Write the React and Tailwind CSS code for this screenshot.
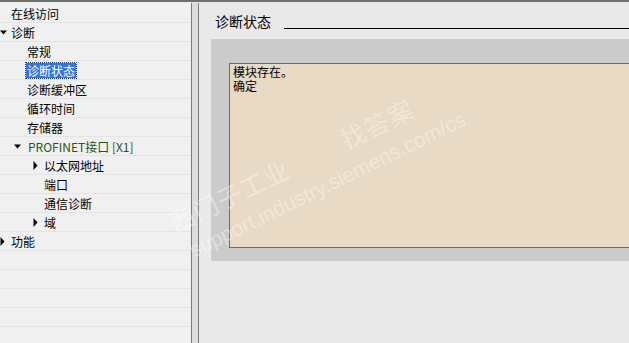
import React from 'react'

const Down = () => (
  <svg width="7" height="5" viewBox="0 0 7 5" className="shrink-0">
    <path d="M0 0.5 L7 0.5 L3.5 4.5 Z" fill="#000" />
  </svg>
)

const Right = () => (
  <svg width="5" height="9" viewBox="0 0 5 9" className="shrink-0">
    <path d="M0.5 0 L4.5 4.5 L0.5 9 Z" fill="#000" />
  </svg>
)

const rows = [
  { label: '在线访问', x: 11 },
  { label: '诊断', x: 11, arrow: 'down', ax: 0 },
  { label: '常规', x: 27 },
  { label: '诊断状态', x: 27, selected: true },
  { label: '诊断缓冲区', x: 27 },
  { label: '循环时间', x: 27 },
  { label: '存储器', x: 27 },
  { label: 'PROFINET接口 [X1]', x: 28, arrow: 'down', ax: 14, green: true },
  { label: '以太网地址', x: 44, arrow: 'right', ax: 33 },
  { label: '端口', x: 44 },
  { label: '通信诊断', x: 44 },
  { label: '域', x: 44, arrow: 'right', ax: 33 },
  { label: '功能', x: 11, arrow: 'right', ax: 0 },
  { label: '' },
  { label: '' },
  { label: '' },
  { label: '' },
  { label: '' },
]

const App = () => {
  return (
    <div
      className="relative w-[629px] h-[343px] overflow-hidden flex bg-[#e9e9e9] border-t-2 border-[#6f6f6f] text-[12px] text-black"
      style={{ fontFamily: '"Noto Sans CJK SC", "Liberation Sans", sans-serif' }}
    >
      {/* tree */}
      <div className="w-[191px] shrink-0 bg-[#f0f0f0] pt-[2px] flex flex-col">
        {rows.map((r, i) => (
          <div key={i} className="relative h-[19px] shrink-0 border-b border-[#e4e4e4] flex items-center">
            {r.arrow && (
              <span className="absolute top-0 bottom-0 flex items-center" style={{ left: r.ax }}>
                {r.arrow === 'down' ? <Down /> : <Right />}
              </span>
            )}
            {r.label && (
              <span
                className={
                  'absolute leading-[15px] whitespace-nowrap ' +
                  (r.selected
                    ? 'bg-[#3875d7] text-white outline-1 outline-dotted outline-[#1a3a80] px-[1px]'
                    : r.green
                    ? 'text-[#2c5418]'
                    : '')
                }
                style={{ left: r.selected ? r.x - 1 : r.x }}
              >
                {r.label}
              </span>
            )}
          </div>
        ))}
      </div>

      {/* splitter */}
      <div className="w-[8px] shrink-0 mt-[1px] border-x border-[#7c7c7c] bg-[#dcdcdc]" />

      {/* content */}
      <div className="flex-1 pl-[12px] pt-[10px] flex flex-col">
        <div className="flex items-end pl-[4px] h-[18px]">
          <span className="text-[14px] leading-[18px] whitespace-nowrap">诊断状态</span>
          <div className="flex-1 h-px bg-black ml-[13px] mb-[1px]" />
        </div>
        <div className="mt-[9px] w-[440px] h-[222px] bg-[#cbcbcb] pl-[18px] pt-[24px] pb-[13px]">
          <div className="h-full border border-[#3c6ed8] bg-[#e8dac5] pl-[3px] pt-[1px] leading-[14px]">
            <div className="h-[14px]">模块存在。</div>
            <div className="h-[14px]">确定</div>
          </div>
        </div>
      </div>

      {/* watermark */}
      <div
        className="absolute left-[164px] top-[208px] origin-top-left -rotate-[26deg] pointer-events-none text-white/40 whitespace-nowrap"
        style={{ fontFamily: '"Noto Sans CJK SC", sans-serif' }}
      >
        <div className="text-[25px] leading-[30px] tracking-[1px]">
          西门子工业<span className="ml-[60px]">找答案</span>
        </div>
        <div className="text-[21px] leading-[24px] mt-[7px] ml-[6px]" style={{ fontFamily: '"Liberation Sans", sans-serif' }}>
          support.industry.siemens.com/cs
        </div>
      </div>
    </div>
  )
}

export default App
